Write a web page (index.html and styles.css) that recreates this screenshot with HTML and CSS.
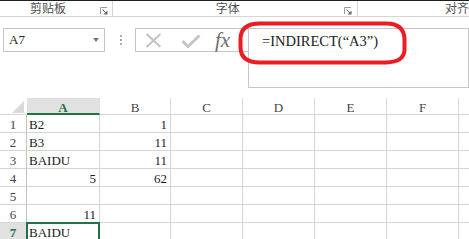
FILE: index.html
```html
<!DOCTYPE html>
<html>
<head>
<meta charset="utf-8">
<link rel="stylesheet" href="styles.css">
</head>
<body>
<div class="ribbon">
  <div class="grp g1"><span class="lbl">剪贴板</span><svg class="launch" width="8" height="8" viewBox="0 0 8 8"><path d="M0.5 7V0.5H7" fill="none" stroke="#9a9a9a"/><path d="M2.5 2.5L6 6" stroke="#666"/><path d="M7.5 7.5H3.5L7.5 3.5Z" fill="#666"/></svg></div>
  <div class="grp g2"><span class="lbl">字体</span><svg class="launch" width="8" height="8" viewBox="0 0 8 8"><path d="M0.5 7V0.5H7" fill="none" stroke="#9a9a9a"/><path d="M2.5 2.5L6 6" stroke="#666"/><path d="M7.5 7.5H3.5L7.5 3.5Z" fill="#666"/></svg></div>
  <div class="grp g3"><span class="lbl">对齐</span></div>
</div>
<div class="fbar">
  <div class="namebox"><span class="ref">A7</span><span class="arrow"></span></div>
  <div class="dots"><i></i><i></i><i></i></div>
  <div class="fxbox">
    <svg class="ic-x" width="17" height="15" viewBox="0 0 17 15"><path d="M1.5 1L15.5 14M15.5 1L1.5 14" stroke="#c4c4c4" stroke-width="2.2"/></svg>
    <svg class="ic-ok" width="20" height="14" viewBox="0 0 20 14"><path d="M1.5 7L7 12.5L18.5 1.5" fill="none" stroke="#c4c4c4" stroke-width="3"/></svg>
    <span class="fx">fx</span>
  </div>
  <div class="finput">=INDIRECT(“A3”)</div>
  <svg class="oval" width="174" height="48" viewBox="0 0 174 48"><path d="M24 4.5H150Q168 4.5 168.5 20V31Q168 43 150 43.5H24Q4.5 43.5 4.5 28V20Q4.5 4.5 24 4.5Z" fill="none" stroke="#ec1c24" stroke-width="4"/></svg>
</div>
<div class="sheet">
  <div class="corner"><svg width="26" height="16" viewBox="0 0 26 16"><path d="M24 3V15H12Z" fill="#d9d9d9"/></svg></div>
  <div class="ch sel">A</div><div class="ch">B</div><div class="ch">C</div><div class="ch">D</div><div class="ch">E</div><div class="ch">F</div><div class="ch last"></div>

  <div class="rh">1</div><div class="c">B2</div><div class="c num">1</div><div class="c"></div><div class="c"></div><div class="c"></div><div class="c"></div><div class="c last"></div>
  <div class="rh">2</div><div class="c">B3</div><div class="c num">11</div><div class="c"></div><div class="c"></div><div class="c"></div><div class="c"></div><div class="c last"></div>
  <div class="rh">3</div><div class="c">BAIDU</div><div class="c num">11</div><div class="c"></div><div class="c"></div><div class="c"></div><div class="c"></div><div class="c last"></div>
  <div class="rh">4</div><div class="c num">5</div><div class="c num">62</div><div class="c"></div><div class="c"></div><div class="c"></div><div class="c"></div><div class="c last"></div>
  <div class="rh">5</div><div class="c"></div><div class="c"></div><div class="c"></div><div class="c"></div><div class="c"></div><div class="c"></div><div class="c last"></div>
  <div class="rh">6</div><div class="c num">11</div><div class="c"></div><div class="c"></div><div class="c"></div><div class="c"></div><div class="c"></div><div class="c last"></div>
  <div class="rh sel">7</div><div class="c active">BAIDU</div><div class="c"></div><div class="c"></div><div class="c"></div><div class="c"></div><div class="c"></div><div class="c last"></div>
</div>
</body>
</html>
```
FILE: styles.css
```css
html, body {
  margin: 0;
  padding: 0;
  background: #ffffff;
  overflow: hidden;
}
body {
  width: 469px;
  height: 239px;
  font-family: "Liberation Serif", serif;
}
.ribbon {
  display: flex;
  height: 15px;
  border-top: 1px solid #1e1e1e;
  border-bottom: 1px solid #d5d5d5;
  background: #ffffff;
}
.grp {
  display: flex;
  align-items: flex-start;
  box-sizing: border-box;
  height: 15px;
}
.g1 { width: 115px; border-right: 1px solid #d5d5d5; }
.g2 { width: 250px; border-right: 1px solid #d5d5d5; }
.g3 { flex: 1; }
.lbl {
  font-family: "Noto Sans CJK SC", sans-serif;
  font-size: 12px;
  line-height: 14px;
  color: #505050;
  white-space: nowrap;
}
.g1 .lbl { margin-left: 30px; }
.g2 .lbl { margin-left: 103px; }
.g3 .lbl { margin-left: 87px; }
.launch {
  margin-left: auto;
  margin-top: 6px;
}
.g1 .launch { margin-right: 4px; }
.g2 .launch { margin-right: 5px; }

.fbar {
  position: relative;
  display: flex;
  align-items: flex-start;
  margin-top: 11px;
}
.namebox {
  box-sizing: border-box;
  margin-left: 3px;
  width: 102px;
  height: 24px;
  border: 1px solid #c6c6c6;
  display: flex;
  align-items: center;
  padding-left: 5px;
}
.ref {
  font-size: 13px;
  color: #222;
  line-height: 14px;
}
.arrow {
  margin-left: auto;
  margin-right: 5px;
  width: 0;
  height: 0;
  border-top: 4px solid #777;
  border-left: 3.5px solid transparent;
  border-right: 3.5px solid transparent;
}
.dots {
  display: flex;
  flex-direction: column;
  gap: 2px;
  margin-left: 15px;
  margin-top: 7px;
}
.dots i {
  display: block;
  width: 2px;
  height: 2px;
  background: #a8a8a8;
}
.fxbox {
  box-sizing: border-box;
  margin-left: 13px;
  width: 113px;
  height: 24px;
  border: 1px solid #c6c6c6;
  border-right: none;
  display: flex;
  align-items: center;
  padding-left: 9px;
}
.ic-ok { margin-left: 19px; margin-top: 2px; }
.fx {
  margin-left: 14px;
  font-family: "Liberation Serif", serif;
  font-style: italic;
  font-size: 21px;
  line-height: 20px;
  color: #6e6e6e;
}
.finput {
  box-sizing: border-box;
  width: 221px;
  height: 60px;
  border: 1px solid #c6c6c6;
  padding: 4px 0 0 13px;
  font-size: 14.5px;
  line-height: 16px;
  color: #222;
  white-space: nowrap;
}
.oval {
  position: absolute;
  left: 236px;
  top: -9px;
}

.sheet {
  margin-top: 10px;
  display: grid;
  grid-template-columns: 27px 73px 71px 72px 72px 72px 72px 10px;
  grid-template-rows: 17px repeat(7, 18px);
  font-size: 13px;
  line-height: 17px;
  color: #1a1a1a;
}
.sheet > div {
  box-sizing: border-box;
  white-space: nowrap;
  border-bottom: 1px solid #d4d4d4;
  border-right: 1px solid #d4d4d4;
}
.corner {
  border-right-color: transparent !important;
}
.corner svg { display: block; }
.ch {
  text-align: center;
  color: #444;
  padding-top: 2px;
  line-height: 15px;
  border-right-color: #dedede !important;
}
.ch.sel {
  background: #e1e1e1;
  color: #217346;
  font-weight: bold;
  border-bottom: 2px solid #217346 !important;
}
.rh {
  text-align: center;
  color: #444;
  padding-top: 3px;
  line-height: 14px;
  border-right-color: #c2c2c2 !important;
}
.rh.sel {
  background: #e1e1e1;
  color: #217346;
  font-weight: bold;
}
.c {
  padding: 3px 3px 0 2px;
  line-height: 14px;
}
.c.num { text-align: right; }
.last { border-right: none !important; }
.c.active { position: relative; }
.c.active::after {
  content: "";
  position: absolute;
  top: -1px;
  left: -1px;
  right: -1px;
  bottom: -1px;
  border: 2px solid #217346;
}
```
